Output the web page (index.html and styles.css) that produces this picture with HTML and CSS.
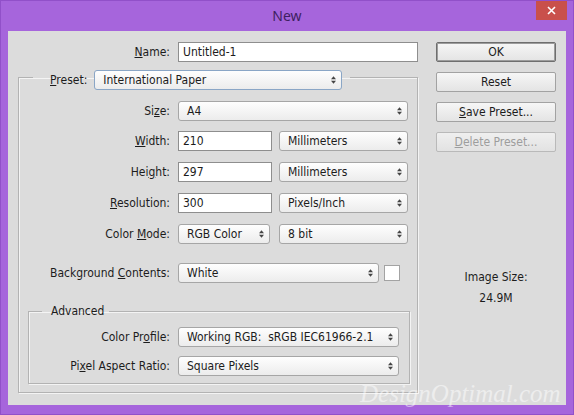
FILE: index.html
```html
<!DOCTYPE html>
<html>
<head>
<meta charset="utf-8">
<title>New</title>
<link rel="stylesheet" href="styles.css">
</head>
<body>
<div class="window">
  <header class="titlebar">
    <span></span>
    <h1 class="title">New</h1>
    <button class="close" aria-label="Close"><svg width="9" height="9" viewBox="0 0 9 9"><path d="M1 1L8 8M8 1L1 8" stroke="#fff" stroke-width="1.6" fill="none"/></svg></button>
  </header>
  <main class="client">
    <div class="form">
      <div class="row">
        <label class="label label-name"><u>N</u>ame:</label>
        <input class="text w-name" type="text" value="Untitled-1">
      </div>
      <fieldset class="group preset">
        <legend class="preset-legend">
          <label class="legend-label"><u>P</u>reset:</label>
          <div class="select focus w-preset"><span>International Paper</span><svg class="arrow" width="5" height="8" viewBox="0 0 5 8"><path d="M0 3.2L2.5 0.3L5 3.2ZM0 4.8L2.5 7.7L5 4.8Z" fill="#444"/></svg></div>
        </legend>
        <div class="row mt11">
          <label class="label label-main">Si<u>z</u>e:</label>
          <div class="select w-full"><span>A4</span><svg class="arrow" width="5" height="8" viewBox="0 0 5 8"><path d="M0 3.2L2.5 0.3L5 3.2ZM0 4.8L2.5 7.7L5 4.8Z" fill="#444"/></svg></div>
        </div>
        <div class="row mt10">
          <label class="label label-main"><u>W</u>idth:</label>
          <input class="text w-num" type="text" value="210">
          <div class="select w-unit"><span>Millimeters</span><svg class="arrow" width="5" height="8" viewBox="0 0 5 8"><path d="M0 3.2L2.5 0.3L5 3.2ZM0 4.8L2.5 7.7L5 4.8Z" fill="#444"/></svg></div>
        </div>
        <div class="row mt11">
          <label class="label label-main">Hei<u>g</u>ht:</label>
          <input class="text w-num" type="text" value="297">
          <div class="select w-unit"><span>Millimeters</span><svg class="arrow" width="5" height="8" viewBox="0 0 5 8"><path d="M0 3.2L2.5 0.3L5 3.2ZM0 4.8L2.5 7.7L5 4.8Z" fill="#444"/></svg></div>
        </div>
        <div class="row mt11">
          <label class="label label-main"><u>R</u>esolution:</label>
          <input class="text w-num" type="text" value="300">
          <div class="select w-unit"><span>Pixels/Inch</span><svg class="arrow" width="5" height="8" viewBox="0 0 5 8"><path d="M0 3.2L2.5 0.3L5 3.2ZM0 4.8L2.5 7.7L5 4.8Z" fill="#444"/></svg></div>
        </div>
        <div class="row mt11">
          <label class="label label-main">Color <u>M</u>ode:</label>
          <div class="select w-mode"><span>RGB Color</span><svg class="arrow" width="5" height="8" viewBox="0 0 5 8"><path d="M0 3.2L2.5 0.3L5 3.2ZM0 4.8L2.5 7.7L5 4.8Z" fill="#444"/></svg></div>
          <div class="select w-unit"><span>8 bit</span><svg class="arrow" width="5" height="8" viewBox="0 0 5 8"><path d="M0 3.2L2.5 0.3L5 3.2ZM0 4.8L2.5 7.7L5 4.8Z" fill="#444"/></svg></div>
        </div>
        <div class="row mt19">
          <label class="label label-main">Background <u>C</u>ontents:</label>
          <div class="select w-bg"><span>White</span><svg class="arrow" width="5" height="8" viewBox="0 0 5 8"><path d="M0 3.2L2.5 0.3L5 3.2ZM0 4.8L2.5 7.7L5 4.8Z" fill="#444"/></svg></div>
          <span class="swatch"></span>
        </div>
        <fieldset class="group advanced">
          <legend class="adv-legend">Advanced</legend>
          <div class="row mt8">
            <label class="label label-adv">Color Pr<u>o</u>file:</label>
            <div class="select w-adv"><span>Working RGB:&nbsp; sRGB IEC61966-2.1</span><svg class="arrow" width="5" height="8" viewBox="0 0 5 8"><path d="M0 3.2L2.5 0.3L5 3.2ZM0 4.8L2.5 7.7L5 4.8Z" fill="#444"/></svg></div>
          </div>
          <div class="row mt9">
            <label class="label label-adv">Pi<u>x</u>el Aspect Ratio:</label>
            <div class="select w-adv"><span>Square Pixels</span><svg class="arrow" width="5" height="8" viewBox="0 0 5 8"><path d="M0 3.2L2.5 0.3L5 3.2ZM0 4.8L2.5 7.7L5 4.8Z" fill="#444"/></svg></div>
          </div>
        </fieldset>
      </fieldset>
    </div>
    <aside class="side">
      <button class="btn default">OK</button>
      <button class="btn">Reset</button>
      <button class="btn"><u>S</u>ave Preset...</button>
      <button class="btn disabled"><u>D</u>elete Preset...</button>
      <div class="image-size">
        <div class="is-label">Image Size:</div>
        <div class="is-value">24.9M</div>
      </div>
    </aside>
  </main>
  <div class="watermark">DesignOptimal.com</div>
</div>
</body>
</html>
```
FILE: styles.css
```css
* { box-sizing: border-box; }

html, body {
  margin: 0;
  padding: 0;
  background: #a665dc;
}

body {
  font-family: "DejaVu Sans Condensed", "DejaVu Sans", sans-serif;
  font-stretch: condensed;
  font-size: 12px;
  color: #1c1c1c;
}

.window {
  position: relative;
  width: 574px;
  height: 415px;
  background: #a665dc;
  border: 1px solid #9150c9;
  overflow: hidden;
}

.titlebar {
  height: 30px;
  display: grid;
  grid-template-columns: 1fr auto 1fr;
}

.title {
  margin: 0;
  align-self: center;
  font-family: "Noto Sans", "Open Sans", sans-serif;
  font-stretch: normal;
  font-weight: normal;
  font-size: 14px;
  line-height: 30px;
  color: #3e1f61;
}

.close {
  justify-self: end;
  align-self: start;
  width: 31px;
  height: 20px;
  margin: -1px 6px 0 0;
  padding: 0;
  border: none;
  background: #c9504b;
  display: flex;
  align-items: center;
  justify-content: center;
}

.client {
  margin: 0 7px;
  height: 374px;
  background: #dcdcdc;
  display: flex;
  padding-top: 11px;
}

.form {
  width: 410px;
  padding-left: 10px;
}

.row {
  display: flex;
  align-items: center;
  height: 20px;
}

.mt8 { margin-top: 8px; }
.mt9 { margin-top: 9px; }
.mt10 { margin-top: 10px; }
.mt11 { margin-top: 11px; }
.mt19 { margin-top: 19px; }

.label {
  text-align: right;
  margin-right: 8px;
  white-space: nowrap;
}
.label-name { width: 152px; }
.label-main { width: 151px; }
.label-adv { width: 141px; }

.text {
  height: 20px;
  border: 1px solid #8e8e8e;
  background: #fff;
  padding: 0 4px;
  font: inherit;
  color: inherit;
  outline: none;
  margin: 0;
}
.w-name { width: 240px; }
.w-num { width: 94px; margin-right: 7px; }

.select {
  height: 20px;
  display: flex;
  align-items: center;
  justify-content: space-between;
  padding: 0 5px 0 8px;
  border: 1px solid #a6a6a6;
  border-radius: 3px;
  background: linear-gradient(#fefefe, #ececec);
  white-space: nowrap;
}
.select.focus { border-color: #8aa6c6; }
.arrow { flex: none; }

.w-preset { width: 248px; }
.w-full { width: 230px; }
.w-unit { width: 129px; }
.w-mode { width: 92px; margin-right: 9px; }
.w-bg { width: 201px; }
.w-adv { width: 221px; }

.swatch {
  width: 16px;
  height: 16px;
  margin-left: 5px;
  background: #fff;
  border: 1px solid #a3a3a3;
}

.group {
  margin: 0;
  padding: 0;
  min-inline-size: 0;
  border: 1px solid #b3b3b3;
  box-shadow: inset 1px 1px 0 #f4f4f4, 1px 1px 0 #f4f4f4;
}

.preset {
  width: 400px;
  margin-top: 3px;
  padding-bottom: 8px;
}

.preset-legend {
  display: flex;
  align-items: center;
  margin-left: 14px;
  padding: 5px 8px 0 17px;
}

.legend-label {
  margin-right: 7px;
}

.advanced {
  width: 382px;
  margin: 20px 0 0 9px;
  padding-bottom: 7px;
}

.adv-legend {
  margin-left: 13px;
  padding: 0 5px 0 9px;
  line-height: 16px;
}

.side {
  width: 120px;
  margin-left: 18px;
  display: flex;
  flex-direction: column;
  gap: 10px;
}

.btn {
  height: 20px;
  width: 120px;
  margin: 0;
  padding: 0;
  font: inherit;
  color: inherit;
  border: 1px solid #a2a2a2;
  border-radius: 2px;
  background: linear-gradient(#f6f6f6, #e4e4e4);
}
.btn.default {
  border-color: #6e6e6e;
  box-shadow: inset 0 0 0 1px #9c9c9c;
}
.btn.disabled {
  color: #9d9d9d;
  border-color: #b9b9b9;
  background: linear-gradient(#efefef, #e2e2e2);
}

.image-size {
  margin-top: 107px;
  text-align: center;
  line-height: 16px;
}
.is-value { margin-top: 5px; }

.watermark {
  position: absolute;
  left: 359px;
  top: 378px;
  font-family: "Liberation Serif", serif;
  font-style: italic;
  font-stretch: normal;
  font-size: 25px;
  line-height: 29px;
  color: rgba(255, 255, 255, 0.5);
  white-space: nowrap;
  pointer-events: none;
}
```
